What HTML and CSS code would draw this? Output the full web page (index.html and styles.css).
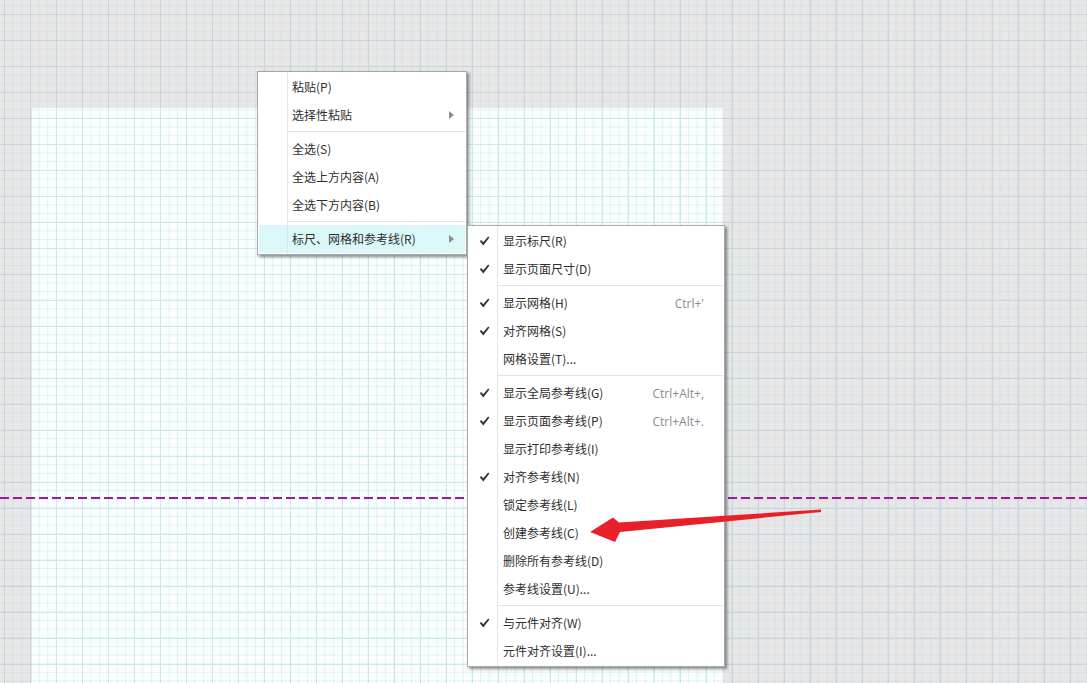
FILE: index.html
```html
<!DOCTYPE html>
<html lang="zh-CN">
<head>
<meta charset="utf-8">
<title>Context menu</title>
<link rel="stylesheet" href="styles.css">
</head>
<body>
<div class="canvas">
  <div class="page"></div>

  <svg class="overlay" width="1087" height="683" viewBox="0 0 1087 683">
    <line x1="0" y1="498" x2="1087" y2="498" stroke="#9c1a9c" stroke-width="2" stroke-dasharray="9 4"/>
  </svg>

  <div class="menu menu-main">
    <div class="item"><span class="label">粘贴(P)</span></div>
    <div class="item"><span class="label">选择性粘贴</span><span class="sub-arrow"></span></div>
    <div class="sep"></div>
    <div class="item"><span class="label">全选(S)</span></div>
    <div class="item"><span class="label">全选上方内容(A)</span></div>
    <div class="item"><span class="label">全选下方内容(B)</span></div>
    <div class="sep"></div>
    <div class="item active"><span class="label">标尺、网格和参考线(R)</span><span class="sub-arrow"></span></div>
  </div>

  <div class="menu menu-sub">
    <div class="item checked"><span class="label">显示标尺(R)</span></div>
    <div class="item checked"><span class="label">显示页面尺寸(D)</span></div>
    <div class="sep"></div>
    <div class="item checked"><span class="label">显示网格(H)</span><span class="key">Ctrl+'</span></div>
    <div class="item checked"><span class="label">对齐网格(S)</span></div>
    <div class="item"><span class="label">网格设置(T)...</span></div>
    <div class="sep"></div>
    <div class="item checked"><span class="label">显示全局参考线(G)</span><span class="key">Ctrl+Alt+,</span></div>
    <div class="item checked"><span class="label">显示页面参考线(P)</span><span class="key">Ctrl+Alt+.</span></div>
    <div class="item"><span class="label">显示打印参考线(I)</span></div>
    <div class="item checked"><span class="label">对齐参考线(N)</span></div>
    <div class="item"><span class="label">锁定参考线(L)</span></div>
    <div class="item"><span class="label">创建参考线(C)</span></div>
    <div class="item"><span class="label">删除所有参考线(D)</span></div>
    <div class="item"><span class="label">参考线设置(U)...</span></div>
    <div class="sep"></div>
    <div class="item checked"><span class="label">与元件对齐(W)</span></div>
    <div class="item"><span class="label">元件对齐设置(I)...</span></div>
  </div>

  <svg class="overlay" width="1087" height="683" viewBox="0 0 1087 683">
    <polygon points="821,509.5 619,522.5 613,517.5 590,532 615,542 620,532 821,512" fill="#e8202a"/>
  </svg>
</div>
</body>
</html>
```

FILE: styles.css
```css
html, body {
  margin: 0;
  padding: 0;
}

body {
  width: 1087px;
  height: 683px;
  overflow: hidden;
  font-family: "Noto Sans CJK SC", "Noto Sans", sans-serif;
}

.canvas {
  position: relative;
  width: 1087px;
  height: 683px;
  box-sizing: border-box;
  padding: 108px 0 0 32px;
  background-color: #e7e7e7;
  background-image:
    linear-gradient(to right, #c4d5de 1px, transparent 1px),
    linear-gradient(to bottom, #c4d5de 1px, transparent 1px),
    linear-gradient(to right, #d9e0e4 1px, transparent 1px),
    linear-gradient(to bottom, #d9e0e4 1px, transparent 1px);
  background-size: 26px 26px, 26px 26px, 8.6667px 8.6667px, 8.6667px 8.6667px;
  background-position: 4px 14px, 4px 14px, 4px 14px, 4px 14px;
}

.page {
  width: 691px;
  height: 575px;
  background-color: #fbfefe;
  background-image:
    linear-gradient(to right, #cbe8ef 1px, transparent 1px),
    linear-gradient(to bottom, #cbe8ef 1px, transparent 1px),
    linear-gradient(to right, #def2f6 1px, transparent 1px),
    linear-gradient(to bottom, #def2f6 1px, transparent 1px);
  background-size: 26px 26px, 26px 26px, 8.6667px 8.6667px, 8.6667px 8.6667px;
  background-position: -28px -94px, -28px -94px, -28px -94px, -28px -94px;
}

.overlay {
  position: absolute;
  left: 0;
  top: 0;
  pointer-events: none;
}

.menu {
  position: absolute;
  box-sizing: border-box;
  background-color: #ffffff;
  background-image: linear-gradient(to right, transparent 29px, #e6e6e6 29px, #e6e6e6 30px, transparent 30px);
  border: 1px solid #a9a9a9;
  padding: 1px 1px;
  box-shadow: 2px 2px 3px rgba(0, 0, 0, 0.45);
  font-size: 12px;
  color: #2e2e2e;
}

.menu-main {
  left: 257px;
  top: 71px;
  width: 210px;
}

.menu-sub {
  left: 467px;
  top: 225px;
  width: 258px;
}

.item {
  position: relative;
  display: flex;
  align-items: center;
  height: 28px;
  padding: 0 19px 0 33px;
  white-space: nowrap;
}

.menu-sub .item {
  padding-left: 34px;
}

.item.active {
  background-color: rgba(190, 240, 243, 0.55);
}

.label {
  flex: 1;
  line-height: 28px;
}

.key {
  color: #8a8a8a;
  font-family: "Open Sans", "Noto Sans", sans-serif;
  font-size: 12px;
}

.sub-arrow {
  width: 0;
  height: 0;
  border-top: 4px solid transparent;
  border-bottom: 4px solid transparent;
  border-left: 5px solid #8c8c8c;
  margin-right: -8px;
}

.checked::before {
  content: "";
  position: absolute;
  left: 10px;
  top: 9px;
  width: 11px;
  height: 10px;
  background-image: url("data:image/svg+xml;utf8,<svg xmlns='http://www.w3.org/2000/svg' width='11' height='10' viewBox='0 0 11 10'><path d='M0.8 5.2 L2.2 4 L4.2 6.2 L9.2 0.4 L10.4 1.4 L4.3 9.4 Z' fill='%23333333'/></svg>");
  background-repeat: no-repeat;
}

.sep {
  height: 6px;
  margin-left: 29px;
  background-image: linear-gradient(to bottom, transparent 2px, #e3e3e3 2px, #e3e3e3 3px, transparent 3px);
}
```
